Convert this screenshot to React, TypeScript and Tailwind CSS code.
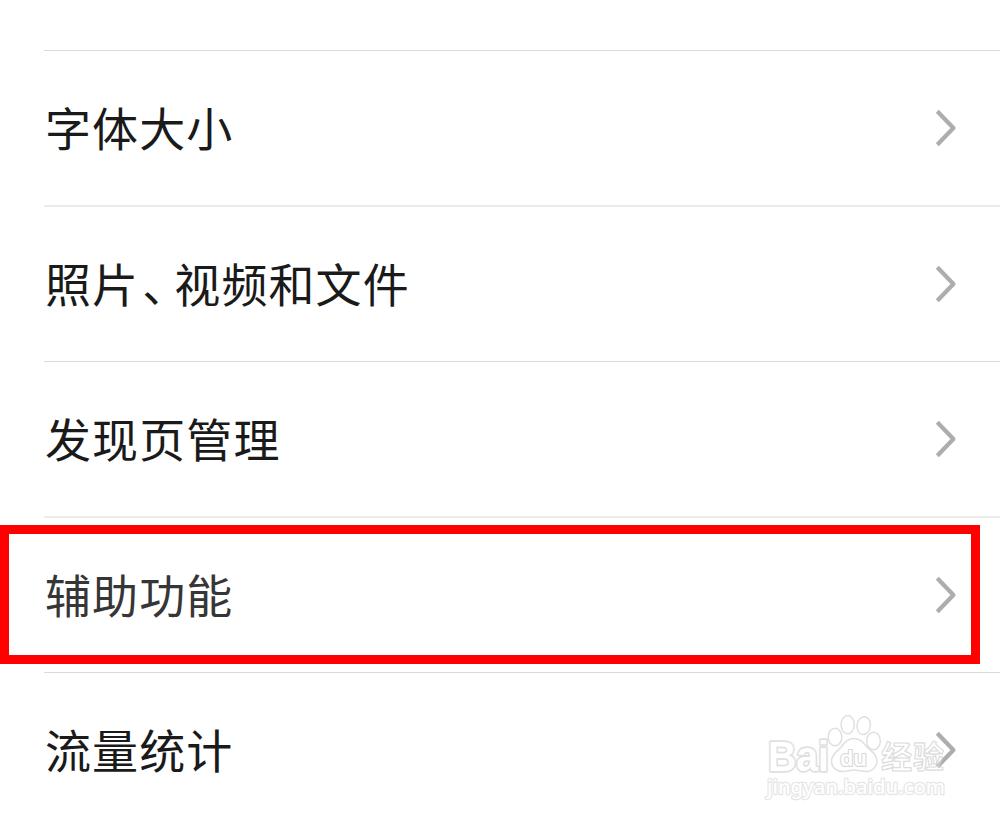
import clsx from "clsx";

const rows = [
  { label: "字体大小", height: "h-[155px]", line: "border-t border-[#dadada]" },
  { label: "照片、视频和文件", height: "h-[156px]", line: "border-t-2 border-[#ebebeb]" },
  { label: "发现页管理", height: "h-[155px]", line: "border-t border-[#dadada]" },
  { label: "辅助功能", height: "h-[156px]", line: "border-t-2 border-[#ebebeb]", muted: true },
  { label: "流量统计", height: "h-[150px]", line: "border-t border-[#dadada]" },
];

function Label({ text }: { text: string }) {
  const [before, after] = text.split("、");

  return (
    <>
      {before}
      {after && (
        <span className="ml-[3px] mr-[8px] [font-feature-settings:'halt']">、</span>
      )}
      {after}
    </>
  );
}

function Chevron() {
  return (
    <svg className="h-10 w-6 shrink-0" viewBox="0 0 24 40" fill="none">
      <path
        d="M3.3 3.2L19.4 20L3.3 36.8"
        stroke="#adadad"
        strokeWidth="4.2"
        strokeLinejoin="round"
      />
    </svg>
  );
}

function Watermark() {
  return (
    <svg
      className="absolute left-[760px] top-[708px] h-[100px] w-[195px]"
      viewBox="0 0 195 100"
      fill="#fff"
      stroke="#e0e0e0"
      strokeWidth="1.5"
      strokeLinejoin="round"
    >
      <text
        x="8"
        y="62.5"
        textLength="61"
        lengthAdjust="spacingAndGlyphs"
        strokeWidth="3.4"
        className="font-['Liberation_Sans'] text-[42px] font-bold [paint-order:stroke]"
      >
        Bai
      </text>
      <ellipse cx="75" cy="29" rx="6.8" ry="8.8" />
      <ellipse cx="87.7" cy="16.6" rx="6.6" ry="9.2" />
      <ellipse cx="103.7" cy="17.6" rx="6.6" ry="9" transform="rotate(8 103.7 17.6)" />
      <ellipse cx="113.5" cy="33" rx="6.8" ry="8.8" />
      <path d="M94 30.5c-6 0-9 3-12 7.5c-3 4.5-10.500 7-10.500 15c0 7 5.500 10.500 11.500 10.500c4 0 7-1.500 11-1.500s8 1.500 12 1.500c6 0 11-4 11-10.500c0-8-7.500-10.500-11-15c-3-4.500-6-7.500-12-7.500z" />
      <text
        x="80"
        y="58"
        textLength="27"
        lengthAdjust="spacingAndGlyphs"
        stroke="#d6d6d6"
        strokeWidth="2.2"
        className="font-['Noto_Sans',sans-serif] text-[22px] font-semibold [paint-order:stroke]"
      >
        du
      </text>
      <text
        x="121"
        y="60"
        textLength="63"
        stroke="#c8c8c8"
        strokeWidth="1.2"
        fillOpacity="0.4"
        strokeOpacity="0.65"
        className="font-['Noto_Sans_CJK_SC',sans-serif] text-[31px] font-bold"
      >
        经验
      </text>
      <text
        x="7"
        y="86"
        textLength="178"
        lengthAdjust="spacingAndGlyphs"
        stroke="#e6e6e6"
        strokeWidth="2.4"
        className="font-['Noto_Sans',sans-serif] text-[20px] font-medium [paint-order:stroke]"
      >
        jingyan.baidu.com
      </text>
    </svg>
  );
}

export default function App() {
  return (
    <div className="relative h-[822px] w-full overflow-hidden bg-white pl-11 pt-[50px] font-['Noto_Sans_CJK_SC',sans-serif]">
      {rows.map((row) => (
        <div
          key={row.label}
          className={clsx("flex justify-between pr-[42px]", row.height, row.line)}
        >
          <span
            className={clsx(
              "ml-px mt-[41px] text-[46px] leading-[68px] tracking-[1.1px] whitespace-nowrap",
              row.muted ? "text-[#363636]" : "text-[#1a1a1a]",
            )}
          >
            <Label text={row.label} />
          </span>
          <div className="mt-[57px]">
            <Chevron />
          </div>
        </div>
      ))}

      {/* Highlight around the accessibility row */}
      <div className="absolute left-0 top-[525px] h-[139px] w-[980px] border-[9px] border-[#fe0000]" />
      <Watermark />
    </div>
  );
}
